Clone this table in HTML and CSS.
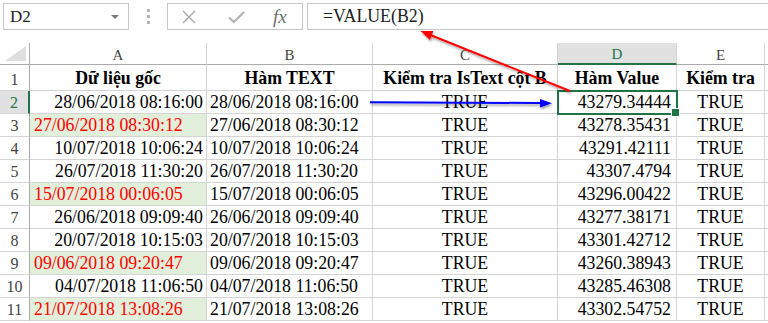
FILE: index.html
```html
<!DOCTYPE html>
<html lang="vi">
<head>
<meta charset="utf-8">
<title>VALUE</title>
<link rel="stylesheet" href="styles.css">
</head>
<body>
<div class="app">
  <div class="fbar">
    <div class="namebox"><span>D2</span><span class="dd"></span></div>
    <div class="dots"><i></i><i></i><i></i></div>
    <div class="fxbox">
      <svg class="ico-x" viewBox="0 0 14 14"><path d="M1 1 L13 13 M13 1 L1 13" stroke="#a6a6a6" stroke-width="1.3" fill="none"/></svg>
      <svg class="ico-ok" viewBox="0 0 17 14"><path d="M1 7.5 L6 12 L16 2" stroke="#b3b3b3" stroke-width="2.2" fill="none"/></svg>
      <span class="fx">fx</span>
    </div>
    <div class="formula">=VALUE(B2)</div>
  </div>

  <div class="sheet">
    <div class="corner"><svg viewBox="0 0 29 21" width="29" height="21"><polygon points="5,18 26,3 26,18" fill="#dfdfdf"/></svg></div>
    <div class="ch">A</div><div class="ch">B</div><div class="ch">C</div><div class="ch selc">D</div><div class="ch">E</div><div class="ch"></div>

    <div class="rh">1</div>
    <div class="hd">Dữ liệu gốc</div><div class="hd">Hàm TEXT</div><div class="hd">Kiểm tra IsText cột B</div><div class="hd">Hàm Value</div><div class="hd">Kiểm tra</div><div></div>

    <div class="rh selr">2</div>
    <div class="ra">28/06/2018 08:16:00</div><div class="lb">28/06/2018 08:16:00</div><div class="c">TRUE</div><div class="rd sel">43279.34444</div><div class="c">TRUE</div><div></div>

    <div class="rh">3</div>
    <div class="hl">27/06/2018 08:30:12</div><div class="lb">27/06/2018 08:30:12</div><div class="c">TRUE</div><div class="rd">43278.35431</div><div class="c">TRUE</div><div></div>

    <div class="rh">4</div>
    <div class="ra">10/07/2018 10:06:24</div><div class="lb">10/07/2018 10:06:24</div><div class="c">TRUE</div><div class="rd">43291.42111</div><div class="c">TRUE</div><div></div>

    <div class="rh">5</div>
    <div class="ra">26/07/2018 11:30:20</div><div class="lb">26/07/2018 11:30:20</div><div class="c">TRUE</div><div class="rd">43307.4794</div><div class="c">TRUE</div><div></div>

    <div class="rh">6</div>
    <div class="hl">15/07/2018 00:06:05</div><div class="lb">15/07/2018 00:06:05</div><div class="c">TRUE</div><div class="rd">43296.00422</div><div class="c">TRUE</div><div></div>

    <div class="rh">7</div>
    <div class="ra">26/06/2018 09:09:40</div><div class="lb">26/06/2018 09:09:40</div><div class="c">TRUE</div><div class="rd">43277.38171</div><div class="c">TRUE</div><div></div>

    <div class="rh">8</div>
    <div class="ra">20/07/2018 10:15:03</div><div class="lb">20/07/2018 10:15:03</div><div class="c">TRUE</div><div class="rd">43301.42712</div><div class="c">TRUE</div><div></div>

    <div class="rh">9</div>
    <div class="hl">09/06/2018 09:20:47</div><div class="lb">09/06/2018 09:20:47</div><div class="c">TRUE</div><div class="rd">43260.38943</div><div class="c">TRUE</div><div></div>

    <div class="rh">10</div>
    <div class="ra">04/07/2018 11:06:50</div><div class="lb">04/07/2018 11:06:50</div><div class="c">TRUE</div><div class="rd">43285.46308</div><div class="c">TRUE</div><div></div>

    <div class="rh">11</div>
    <div class="hl">21/07/2018 13:08:26</div><div class="lb">21/07/2018 13:08:26</div><div class="c">TRUE</div><div class="rd">43302.54752</div><div class="c">TRUE</div><div></div>
  </div>

  <svg class="arrows" width="768" height="323" viewBox="0 0 768 323">
    <defs>
      <filter id="sh" x="-20%" y="-50%" width="140%" height="200%">
        <feDropShadow dx="1" dy="2" stdDeviation="1.2" flood-color="#000" flood-opacity="0.35"/>
      </filter>
    </defs>
    <g filter="url(#sh)">
      <line x1="570" y1="91" x2="431" y2="35.3" stroke="#ff0000" stroke-width="2"/>
      <polygon points="420.5,31 429.9,39.9 433.4,31.1" fill="#ff0000"/>
    </g>
    <g filter="url(#sh)">
      <line x1="370" y1="102.3" x2="541" y2="103" stroke="#0000ff" stroke-width="2"/>
      <polygon points="552,103.2 540,98.9 540,107.4" fill="#0000ff"/>
    </g>
  </svg>
</div>
</body>
</html>
```

FILE: styles.css
```css
* { box-sizing: border-box; }
html, body { margin: 0; padding: 0; background: #fff; }
body { font-family: "Liberation Serif", "Times New Roman", serif; color: #000; }

.app { position: relative; width: 768px; height: 323px; overflow: hidden; }

/* formula bar */
.fbar { display: flex; height: 27px; margin-top: 3px; padding-left: 3px; }
.namebox {
  width: 126px; border: 1px solid #c6c6c6;
  display: flex; align-items: center; justify-content: space-between;
  padding: 0 9px 0 6px; font-size: 17px; color: #222;
}
.dd { width: 0; height: 0; border-left: 4px solid transparent; border-right: 4px solid transparent; border-top: 4px solid #7a7a7a; }
.dots { width: 38px; display: flex; flex-direction: column; align-items: center; justify-content: center; gap: 3px; }
.dots i { display: block; width: 3px; height: 3px; background: #b4b4b4; }
.fxbox { width: 136px; border: 1px solid #c6c6c6; display: flex; align-items: center; padding-left: 14px; }
.ico-x { width: 14px; height: 14px; display: block; }
.ico-ok { width: 17px; height: 14px; margin-left: 32px; display: block; }
.fx { margin-left: 28px; font-style: italic; font-size: 19px; color: #6d6d6d; line-height: 20px; }
.formula {
  flex: 1; margin-left: 4px; border: 1px solid #c6c6c6; border-right: none;
  display: flex; align-items: center; padding-left: 15px; font-size: 17.8px; color: #222;
}

/* grid */
.sheet {
  margin-top: 13px; display: grid;
  grid-template-columns: 30px 177px 166px 185px 119px 88px 1fr;
  grid-template-rows: 22px 26px repeat(10, 23px);
}
.sheet > div {
  border-right: 1px solid #d4d4d4; border-bottom: 1px solid #d4d4d4;
  display: flex; align-items: flex-end; white-space: nowrap;
  font-size: 17.8px; line-height: 20px; padding: 0 4px 1px;
}
.sheet > .corner { padding: 0; border-right-color: #ababab; border-bottom-color: #ababab; }
.corner svg { display: block; }
.sheet > .ch {
  justify-content: center; font-size: 15px; line-height: 18px; color: #444;
  border-bottom-color: #ababab; padding: 0;
}
.sheet > .selc { background: #e1e1e1; color: #217346; border-bottom: 2px solid #217346; }
.sheet > .rh {
  justify-content: center; font-size: 16px; line-height: 18px; color: #444;
  border-right-color: #ababab; padding: 0 0 1px;
}
.sheet > .selr { background: #e1e1e1; color: #217346; border-right: 2px solid #217346; }
.sheet > .hd { justify-content: center; font-weight: bold; padding-bottom: 2px; }
.sheet > .ra { justify-content: flex-end; padding-right: 3px; }
.sheet > .lb { justify-content: flex-start; padding-left: 3px; }
.sheet > .c { justify-content: center; }
.sheet > .rd { justify-content: flex-end; padding-right: 5px; }
.sheet > .hl { justify-content: flex-start; background: #e2efda; color: #ff0000; padding-left: 4px; }

.sheet > .sel { position: relative; z-index: 2; outline: 2px solid #217346; outline-offset: -1px; }
.sel::after {
  content: ""; position: absolute; right: -4px; bottom: -4px;
  width: 7px; height: 7px; background: #217346; border: 1px solid #fff;
}

.arrows { position: absolute; left: 0; top: 0; pointer-events: none; z-index: 5; }
```
